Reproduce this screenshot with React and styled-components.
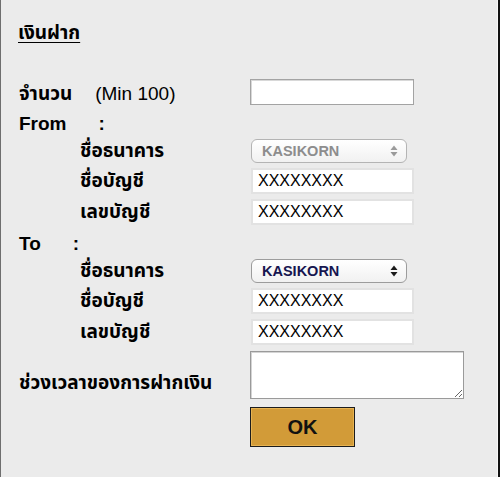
import React from 'react';
import styled, { createGlobalStyle } from 'styled-components';

const GlobalStyle = createGlobalStyle`
    html, body {
        margin: 0;
        padding: 0;
        background: #ebebeb;
    }
    body {
        font-family: "Liberation Sans", "Noto Sans Thai", "Noto Sans", Tahoma, sans-serif;
        color: #000;
    }
`;

function SelectArrows(props) {
    return (
        <svg width="8" height="12" viewBox="0 0 8 12">
            <path d="M4 0.5 L7.5 5 L0.5 5 Z" fill={props.color} />
            <path d="M4 11.5 L7.5 7 L0.5 7 Z" fill={props.color} />
        </svg>
    );
}

function BankSelect(props) {
    return (
        <SelectWrap>
            <StyledSelect disabled={props.disabled} defaultValue="KASIKORN">
                <option>KASIKORN</option>
                <option>SCB</option>
                <option>BANGKOK</option>
            </StyledSelect>
            <ArrowSlot>
                <SelectArrows color={props.disabled ? '#9a9a9a' : '#1a1a1a'} />
            </ArrowSlot>
        </SelectWrap>
    );
}

function App() {
    return (
        <Frame>
            <GlobalStyle />
            <Title>เงินฝาก</Title>
            <FormGrid>
                <Label>
                    จำนวน<Hint>(Min 100)</Hint>
                </Label>
                <AmountInput type="text" />

                <Label>From<Colon>:</Colon></Label>
                <span />

                <Label sub>ชื่อธนาคาร</Label>
                <BankSelect disabled />
                <Label sub>ชื่อบัญชี</Label>
                <InfoInput type="text" defaultValue="XXXXXXXX" readOnly />
                <Label sub>เลขบัญชี</Label>
                <InfoInput type="text" defaultValue="XXXXXXXX" readOnly />

                <Label>To<Colon>:</Colon></Label>
                <span />

                <Label sub>ชื่อธนาคาร</Label>
                <BankSelect />
                <Label sub>ชื่อบัญชี</Label>
                <InfoInput type="text" defaultValue="XXXXXXXX" readOnly />
                <Label sub>เลขบัญชี</Label>
                <InfoInput type="text" defaultValue="XXXXXXXX" readOnly />

                <Label low>ช่วงเวลาของการฝากเงิน</Label>
                <TimeArea />

                <span />
                <OkButton type="button">OK</OkButton>
            </FormGrid>
        </Frame>
    );
}

const Frame = styled.div`
    box-sizing: border-box;
    width: 500px;
    height: 477px;
    background: #ebebeb;
    border-left: 1px solid #6e6e6e;
    border-right: 2px solid #111;
    box-shadow: inset -1px 0 0 #f7f7f7;
    padding: 21px 0 0 17px;
    overflow: hidden;
`;

const Title = styled.div`
    display: inline-block;
    height: 24px;
    font-size: 19px;
    font-weight: bold;
    text-decoration: underline;
    text-underline-offset: 3px;
    line-height: 24px;
    margin-bottom: 34px;
`;

const FormGrid = styled.div`
    display: grid;
    grid-template-columns: 232px 1fr;
    row-gap: 5px;
    align-items: center;
`;

const Label = styled.div`
    box-sizing: border-box;
    display: flex;
    align-items: center;
    height: ${props => props.low ? '30px' : '24px'};
    line-height: 24px;
    padding-left: ${props => props.sub ? '62px' : '1px'};
    padding-top: ${props => props.sub ? '0' : '3px'};
    font-size: 19px;
    font-weight: bold;
    white-space: nowrap;
    align-self: ${props => props.low ? 'end' : 'center'};
    padding-bottom: ${props => props.low ? '6px' : '0'};
`;

const Hint = styled.span`
    font-weight: normal;
    margin-left: 23px;
`;

const Colon = styled.span`
    margin-left: 32px;
`;

const AmountInput = styled.input`
    box-sizing: border-box;
    width: 164px;
    height: 26px;
    margin: 0;
    background: #fff;
    border: 1px solid #a3a3a3;
    box-shadow: inset 1px 1px 0 #d8d8d8;
    outline: none;
`;

const InfoInput = styled.input`
    box-sizing: border-box;
    width: 163px;
    height: 26px;
    margin: 0 0 0 1px;
    padding: 0 0 0 5px;
    background: #fff;
    border: 2px solid #e2e2e2;
    font-family: "Liberation Sans", Arial, sans-serif;
    font-size: 16px;
    color: #000;
    outline: none;
`;

const SelectWrap = styled.div`
    position: relative;
    width: 156px;
    height: 24px;
    margin-left: 1px;
`;

const StyledSelect = styled.select`
    appearance: none;
    box-sizing: border-box;
    width: 100%;
    height: 100%;
    margin: 0;
    padding: 0 0 0 10px;
    border: 1px solid ${props => props.disabled ? '#b4b4b4' : '#9c9c9c'};
    border-radius: 6px;
    background: linear-gradient(#ffffff, #f1f1f1);
    font-family: "Liberation Sans", Arial, sans-serif;
    font-size: 14.5px;
    font-weight: bold;
    color: ${props => props.disabled ? '#8d8d8d' : '#161650'};
    opacity: 1;
    outline: none;
`;

const ArrowSlot = styled.span`
    position: absolute;
    right: 9px;
    top: 6px;
    display: flex;
    pointer-events: none;
`;

const TimeArea = styled.textarea`
    box-sizing: border-box;
    width: 214px;
    height: 48px;
    margin: 1px 0 0;
    background: #fff;
    border: 1px solid #9a9a9a;
    box-shadow: inset 1px 1px 0 #d4d4d4;
    outline: none;
    display: block;
`;

const OkButton = styled.button`
    box-sizing: border-box;
    width: 105px;
    height: 40px;
    margin-top: 3px;
    background: #d29b38;
    border: 1px solid #1c1c1c;
    box-shadow: inset 0 0 0 1px #e7b352;
    font-family: "Liberation Sans", Arial, sans-serif;
    font-size: 20px;
    font-weight: bold;
    color: #111;
    cursor: pointer;
`;

export default App;
